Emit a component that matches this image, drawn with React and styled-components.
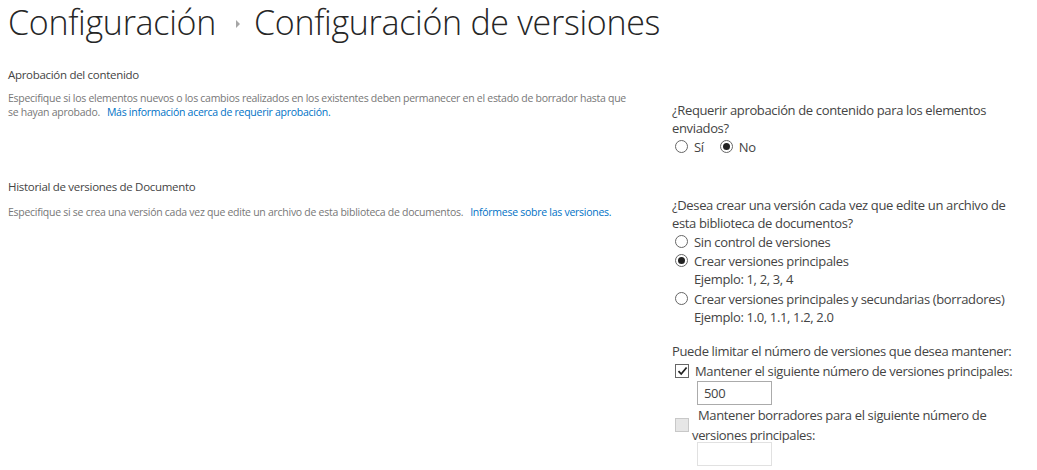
import React from "react";
import styled, { createGlobalStyle } from "styled-components";

const Global = createGlobalStyle`
  html, body { margin: 0; padding: 0; background: #fff; }
  body { font-family: "Open Sans", "Noto Sans", sans-serif; color: #444; }
`;

const Page = styled.div`
  padding: 0 8px;
  width: 1021px;
`;

const TitleRow = styled.h1`
  margin: 0;
  display: flex;
  align-items: center;
  font-family: "Open Sans", sans-serif;
  font-weight: 300;
  font-size: 34px;
  line-height: 44px;
  color: #262626;
  letter-spacing: -0.3px;
  height: 44px;
`;

const Crumb = styled.span``;

const Arrow = styled.span`
  width: 0;
  height: 0;
  border-top: 4px solid transparent;
  border-bottom: 4px solid transparent;
  border-left: 4px solid #a6a6a6;
  margin: 3px 14px 0 20px;
`;

const Section = styled.section`
  display: grid;
  grid-template-columns: 664px 350px;
  margin-top: ${(p) => p.$top}px;
`;

const DescCol = styled.div``;

const SectionHeader = styled.h3`
  margin: 0;
  font-size: 11.5px;
  font-weight: 400;
  line-height: 18px;
  letter-spacing: -0.3px;
  color: #444;
`;

const Description = styled.p`
  margin: ${(p) => p.$gap}px 0 0;
  font-size: 10.5px;
  line-height: 14px;
  letter-spacing: -0.27px;
  color: #777;
  width: 626px;
`;

const Link = styled.a`
  color: #0072c6;
  text-decoration: none;
  margin-left: 7px;
`;

const InputCol = styled.div`
  padding-top: ${(p) => p.$top}px;
  font-size: 13px;
  line-height: 18px;
  letter-spacing: -0.35px;
  color: #444;
`;

const Question = styled.div``;

const InlineRadios = styled.div`
  display: flex;
  gap: 16px;
  padding-left: 3px;
  height: 19px;
  align-items: center;
`;

const RadioRow = styled.label`
  display: flex;
  align-items: center;
  gap: 6px;
  height: 19px;
  padding-left: ${(p) => (p.$inline ? 0 : 3)}px;
`;

const RadioCircle = styled.span`
  width: 11px;
  height: 11px;
  border: 1px solid #666;
  border-radius: 50%;
  display: inline-flex;
  align-items: center;
  justify-content: center;
  background: #fff;
  flex: none;
  &::after {
    content: "";
    width: 7px;
    height: 7px;
    border-radius: 50%;
    background: #222;
    display: ${(p) => (p.$checked ? "block" : "none")};
  }
`;

const Example = styled.div`
  padding-left: 22px;
  height: 19px;
  line-height: 19px;
`;

const LimitText = styled.div`
  margin-top: 15px;
  line-height: 19px;
`;

const CheckRow = styled.div`
  display: flex;
  align-items: center;
  gap: 6px;
  padding-left: 3px;
  height: 19px;
  white-space: nowrap;
`;

const CheckBox = styled.span`
  width: 12px;
  height: 12px;
  flex: none;
  border: 1px solid ${(p) => (p.$disabled ? "#c8c8c8" : "#666")};
  background: ${(p) => (p.$disabled ? "#e6e6e6" : "#fff")};
  display: inline-flex;
  align-items: center;
  justify-content: center;
`;

const NumberInput = styled.div`
  margin-left: 25px;
  margin-top: ${(p) => p.$top}px;
  width: 61px;
  height: 22px;
  border: 1px solid ${(p) => (p.$disabled ? "#e1e1e1" : "#ababab")};
  padding: 0 6px;
  line-height: 22px;
  font-size: 13px;
  color: #444;
`;

const DraftRow = styled.div`
  display: flex;
  align-items: center;
  padding-left: 3px;
`;

const DraftLabel = styled.div`
  padding-left: 3px;
  text-indent: 6px;
  line-height: 20px;
  width: 325px;
`;

function Radio({ checked }) {
  return <RadioCircle $checked={checked} />;
}

export default function App() {
  return (
    <>
      <Global />
      <Page>
        <TitleRow>
          <Crumb>Configuración</Crumb>
          <Arrow />
          <Crumb>Configuración de versiones</Crumb>
        </TitleRow>

        <Section $top={22}>
          <DescCol>
            <SectionHeader>Aprobación del contenido</SectionHeader>
            <Description $gap={7}>
              Especifique si los elementos nuevos o los cambios realizados en los existentes deben permanecer en el estado de borrador hasta que se hayan aprobado.
              <Link href="#">Más información acerca de requerir aprobación.</Link>
            </Description>
          </DescCol>
          <InputCol $top={35}>
            <Question>¿Requerir aprobación de contenido para los elementos enviados?</Question>
            <InlineRadios>
              <RadioRow $inline>
                <Radio />
                Sí
              </RadioRow>
              <RadioRow $inline>
                <Radio checked />
                No
              </RadioRow>
            </InlineRadios>
          </InputCol>
        </Section>

        <Section $top={22}>
          <DescCol>
            <SectionHeader>Historial de versiones de Documento</SectionHeader>
            <Description $gap={9}>
              Especifique si se crea una versión cada vez que edite un archivo de esta biblioteca de documentos.
              <Link href="#">Infórmese sobre las versiones.</Link>
            </Description>
          </DescCol>
          <InputCol $top={18}>
            <Question>¿Desea crear una versión cada vez que edite un archivo de esta biblioteca de documentos?</Question>
            <RadioRow>
              <Radio />
              Sin control de versiones
            </RadioRow>
            <RadioRow>
              <Radio checked />
              Crear versiones principales
            </RadioRow>
            <Example>Ejemplo: 1, 2, 3, 4</Example>
            <RadioRow>
              <Radio />
              Crear versiones principales y secundarias (borradores)
            </RadioRow>
            <Example>Ejemplo: 1.0, 1.1, 1.2, 2.0</Example>

            <LimitText>Puede limitar el número de versiones que desea mantener:</LimitText>
            <CheckRow>
              <CheckBox>
                <svg width="11" height="10" viewBox="0 0 11 10">
                  <path d="M1.5 5.2 L4.2 8 L9.6 1.5" fill="none" stroke="#222" strokeWidth="1.8" />
                </svg>
              </CheckBox>
              Mantener el siguiente número de versiones principales:
            </CheckRow>
            <NumberInput $top={1}>500</NumberInput>
            <DraftRow>
              <CheckBox $disabled />
              <DraftLabel>Mantener borradores para el siguiente número de versiones principales:</DraftLabel>
            </DraftRow>
            <NumberInput $disabled $top={-3} />
          </InputCol>
        </Section>
      </Page>
    </>
  );
}
